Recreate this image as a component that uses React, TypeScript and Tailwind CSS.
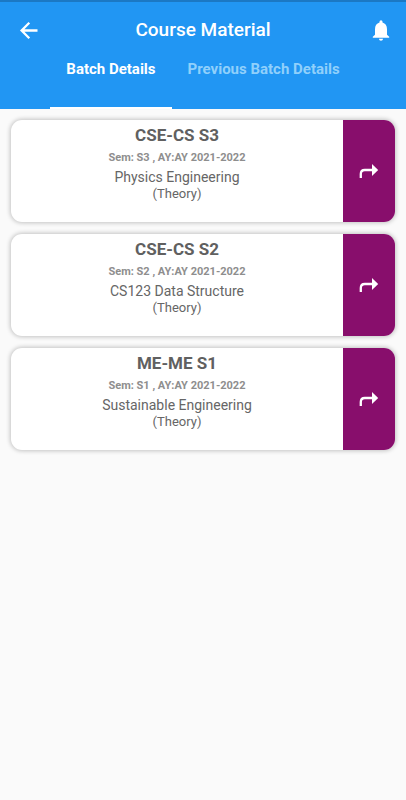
import React from "react";

type Batch = {
  name: string;
  sem: string;
  course: string;
  kind: string;
};

const batches: Batch[] = [
  {
    name: "CSE-CS S3",
    sem: "Sem: S3 , AY:AY 2021-2022",
    course: "Physics Engineering",
    kind: "(Theory)",
  },
  {
    name: "CSE-CS S2",
    sem: "Sem: S2 , AY:AY 2021-2022",
    course: "CS123 Data Structure",
    kind: "(Theory)",
  },
  {
    name: "ME-ME S1",
    sem: "Sem: S1 , AY:AY 2021-2022",
    course: "Sustainable Engineering",
    kind: "(Theory)",
  },
];

function BackIcon() {
  return (
    <svg width="20" height="20" viewBox="0 0 20 20" fill="none" stroke="currentColor" strokeWidth="2.3">
      <path d="M18.5 10.5H3M10.3 2.8L2.6 10.5l7.7 7.7" />
    </svg>
  );
}

function BellIcon() {
  return (
    <svg width="24" height="24" viewBox="0 0 24 24" fill="currentColor">
      <path d="M12 22.8c1.1 0 2-.9 2-2h-4c0 1.1.9 2 2 2zm6-6v-5.6c0-3.3-1.6-6-4.5-6.7v-.7a1.5 1.5 0 0 0-3 0v.7c-2.9.7-4.5 3.4-4.5 6.7v5.6l-2.2 2v1h16.4v-1z" />
    </svg>
  );
}

function ForwardIcon() {
  return (
    <svg width="20" height="16" viewBox="0 0 20 16">
      <path d="M1.8 15V11Q1.8 7 5.8 7H14" fill="none" stroke="currentColor" strokeWidth="2.3" />
      <path d="M13 1L19.2 7L13 13z" fill="currentColor" />
    </svg>
  );
}

function BatchCard({ batch }: { batch: Batch }) {
  return (
    <li className="flex h-[102px] overflow-hidden rounded-[11px] bg-white shadow-[0_0_4px_1px_rgba(0,0,0,0.22)]">
      <div className="flex-1 pt-1 text-center text-[#666666]">
        <h2 className="text-[17px] leading-[22px] font-bold text-[#606060]">{batch.name}</h2>
        <p className="text-[11px] leading-[23px] font-bold text-[#8e8e8e]">{batch.sem}</p>
        <p className="text-[14px] leading-[17px]">{batch.course}</p>
        <p className="text-[13px] leading-[16px]">{batch.kind}</p>
      </div>
      <button
        type="button"
        aria-label={"Open " + batch.name}
        className="flex w-[52px] items-center justify-center bg-[#880e6c] text-white"
      >
        <ForwardIcon />
      </button>
    </li>
  );
}

export default function App() {
  return (
    <div className="min-h-screen bg-[#fafafa] font-['Roboto',sans-serif]">
      {/* App bar */}
      <header className="border-t-2 border-[#1b78c4] bg-[#2196f3] text-white">
        <div className="grid h-[46px] grid-cols-[1fr_auto_1fr] items-center px-[13px] pt-2.5">
          <button type="button" aria-label="Back" className="flex w-8 justify-center">
            <BackIcon />
          </button>
          <h1 className="text-[19px] font-medium">Course Material</h1>
          <button type="button" aria-label="Notifications" className="flex w-6 justify-center justify-self-end">
            <BellIcon />
          </button>
        </div>

        {/* Tabs */}
        <nav className="flex justify-center text-[15px] leading-[18px] font-bold">
          <a href="#batch" className="h-[61px] border-b-2 border-white px-4 pt-3">
            Batch Details
          </a>
          <a href="#previous" className="h-[61px] px-4 pt-3 text-[#90d0fb]">
            Previous Batch Details
          </a>
        </nav>
      </header>

      <main className="px-[11px] pt-[11px]">
        <ul className="flex flex-col gap-3">
          {batches.map((batch) => (
            <BatchCard key={batch.name} batch={batch} />
          ))}
        </ul>
      </main>
    </div>
  );
}
